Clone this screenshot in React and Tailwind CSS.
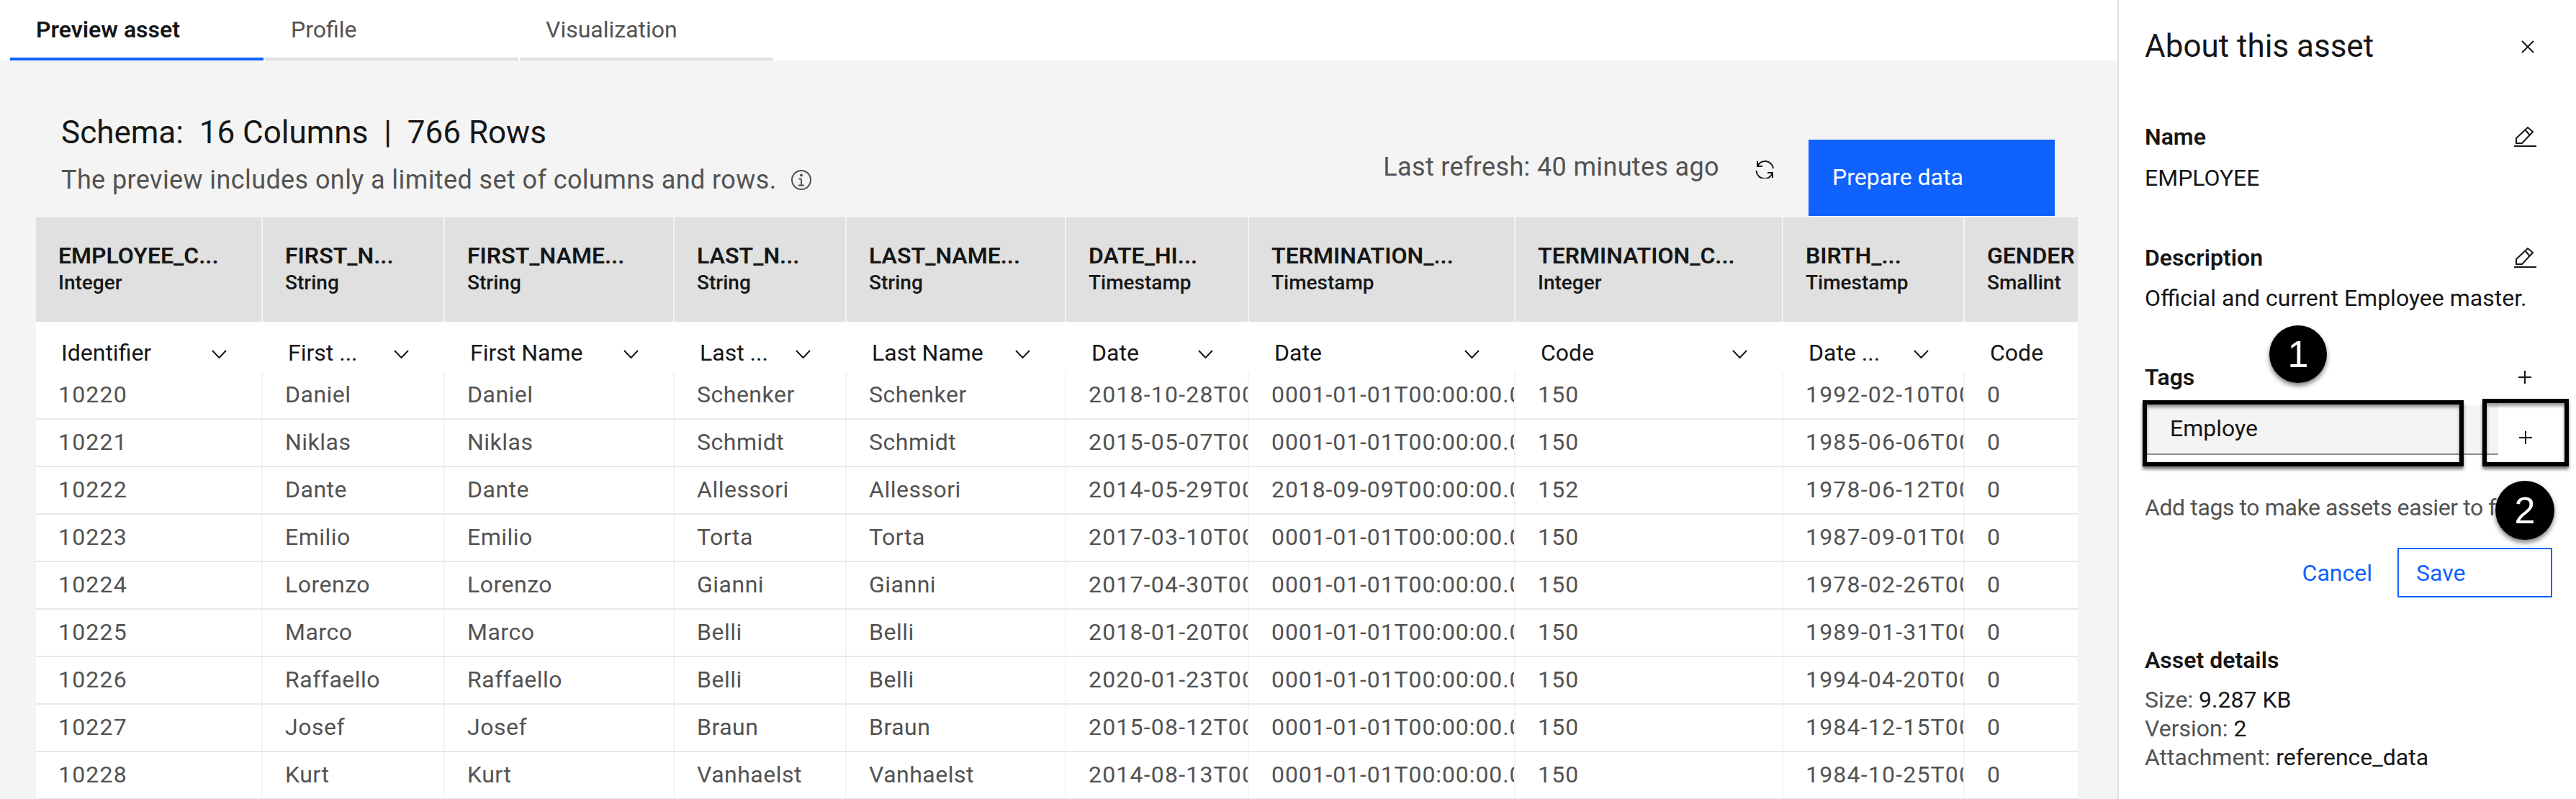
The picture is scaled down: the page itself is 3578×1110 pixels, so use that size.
import React from 'react';

const cols = 'grid grid-cols-[315px_253px_319px_239px_305px_254px_370px_372px_252px_157px]';

// number columns run a little wider than the name columns
const cellTracking = [
  'tracking-[1.2px]',
  'tracking-[0.5px]',
  'tracking-[0.5px]',
  'tracking-[0.5px]',
  'tracking-[0.5px]',
  'tracking-[1.2px]',
  'tracking-[0.9px]',
  'tracking-[1.2px]',
  'tracking-[1.2px]',
  'tracking-[1.2px]',
];

const columns = [
  { name: 'EMPLOYEE_C...', type: 'Integer', filter: 'Identifier', chevron: true },
  { name: 'FIRST_N...', type: 'String', filter: 'First ...', chevron: true },
  { name: 'FIRST_NAME...', type: 'String', filter: 'First Name', chevron: true },
  { name: 'LAST_N...', type: 'String', filter: 'Last ...', chevron: true },
  { name: 'LAST_NAME...', type: 'String', filter: 'Last Name', chevron: true },
  { name: 'DATE_HI...', type: 'Timestamp', filter: 'Date', chevron: true },
  { name: 'TERMINATION_...', type: 'Timestamp', filter: 'Date', chevron: true },
  { name: 'TERMINATION_C...', type: 'Integer', filter: 'Code', chevron: true },
  { name: 'BIRTH_...', type: 'Timestamp', filter: 'Date ...', chevron: true },
  { name: 'GENDER', type: 'Smallint', filter: 'Code', chevron: false },
];

const rows = [
  ['10220', 'Daniel', 'Daniel', 'Schenker', 'Schenker', '2018-10-28T00:00:00', '0001-01-01T00:00:00.000', '150', '1992-02-10T00:00:00', '0'],
  ['10221', 'Niklas', 'Niklas', 'Schmidt', 'Schmidt', '2015-05-07T00:00:00', '0001-01-01T00:00:00.000', '150', '1985-06-06T00:00:00', '0'],
  ['10222', 'Dante', 'Dante', 'Allessori', 'Allessori', '2014-05-29T00:00:00', '2018-09-09T00:00:00.000', '152', '1978-06-12T00:00:00', '0'],
  ['10223', 'Emilio', 'Emilio', 'Torta', 'Torta', '2017-03-10T00:00:00', '0001-01-01T00:00:00.000', '150', '1987-09-01T00:00:00', '0'],
  ['10224', 'Lorenzo', 'Lorenzo', 'Gianni', 'Gianni', '2017-04-30T00:00:00', '0001-01-01T00:00:00.000', '150', '1978-02-26T00:00:00', '0'],
  ['10225', 'Marco', 'Marco', 'Belli', 'Belli', '2018-01-20T00:00:00', '0001-01-01T00:00:00.000', '150', '1989-01-31T00:00:00', '0'],
  ['10226', 'Raffaello', 'Raffaello', 'Belli', 'Belli', '2020-01-23T00:00:00', '0001-01-01T00:00:00.000', '150', '1994-04-20T00:00:00', '0'],
  ['10227', 'Josef', 'Josef', 'Braun', 'Braun', '2015-08-12T00:00:00', '0001-01-01T00:00:00.000', '150', '1984-12-15T00:00:00', '0'],
  ['10228', 'Kurt', 'Kurt', 'Vanhaelst', 'Vanhaelst', '2014-08-13T00:00:00', '0001-01-01T00:00:00.000', '150', '1984-10-25T00:00:00', '0'],
];

const Chevron = () => (
  <svg width="21" height="12" viewBox="0 0 21 12" fill="none" stroke="#161616" strokeWidth="2" className="shrink-0 mt-[16px]">
    <path d="M1 1l9.5 10L20 1" />
  </svg>
);

const Plus = () => (
  <svg width="18" height="18" viewBox="0 0 18 18" fill="none" stroke="#161616" strokeWidth="2">
    <path d="M9 0v18M0 9h18" />
  </svg>
);

const Edit = () => (
  <svg width="31" height="30" viewBox="0 0 31 30" fill="none" stroke="#161616" strokeWidth="2">
    <path d="M0 28h31" />
    <path d="M3 24v-7L19 2l7 6-15 16z" />
    <path d="M16 6l6 7" />
  </svg>
);

export default function App() {
  return (
    <div className="w-[3578px] h-[1110px] flex overflow-hidden bg-white font-['Roboto',sans-serif] text-[32px] leading-[40px] text-[#161616]">
      <main className="w-[2941px] shrink-0 flex flex-col">
        {/* tabs */}
        <div className="h-[84px] shrink-0 pl-[14px] flex gap-[2px]">
          <div className="w-[352px] border-b-4 border-[#0f62fe] pl-[36px] pt-[21px] font-semibold">Preview asset</div>
          <div className="w-[352px] border-b-4 border-[#e0e0e0] pl-[36px] pt-[21px] text-[#525252]">Profile</div>
          <div className="w-[352px] border-b-4 border-[#e0e0e0] pl-[36px] pt-[21px] text-[#525252]">Visualization</div>
        </div>

        <div className="flex-1 bg-[#f4f4f4] pl-[50px] pr-[55px] flex flex-col">
          <div className="h-[218px] shrink-0 flex justify-between pr-[32px]">
            <div className="pl-[35px] pt-[72px]">
              <h2 className="text-[44px] leading-[56px] whitespace-pre">Schema:  16 Columns  |  766 Rows</h2>
              <p className="mt-[18px] text-[36px] tracking-[0.4px] text-[#525252] flex items-center gap-[20px] whitespace-nowrap">
                The preview includes only a limited set of columns and rows.
                <svg width="28" height="28" viewBox="0 0 28 28" fill="none" stroke="#525252" strokeWidth="2">
                  <circle cx="14" cy="14" r="13" />
                  <path d="M14 12.5v9M10 21.5h8M10.5 12.5H14" />
                  <circle cx="14" cy="7.5" r="1" fill="#525252" />
                </svg>
              </p>
            </div>
            <div className="flex items-start pt-[110px]">
              <span className="text-[36px] tracking-[0.35px] text-[#525252] mt-[18px] whitespace-nowrap">Last refresh: 40 minutes ago</span>
              <svg width="26" height="26" viewBox="0 0 26 26" fill="none" stroke="#161616" strokeWidth="2" className="ml-[50px] mt-[28px]">
                <path d="M3 2v7h7" />
                <path d="M3 9A11.5 11.5 0 0 1 25 12" />
                <path d="M24 25v-7h-7" />
                <path d="M24 18A11.5 11.5 0 0 1 1.5 15" />
              </svg>
              <button className="ml-[48px] w-[342px] h-[106px] bg-[#0f62fe] text-white text-left pl-[33px] pb-[2px]">Prepare data</button>
            </div>
          </div>

          {/* table */}
          <div className="flex-1 bg-white overflow-hidden">
            <div className={`${cols} h-[145px] bg-[#e0e0e0]`}>
              {columns.map((c, i) => (
                <div key={i} className="pl-[31px] pt-[33px] border-r-2 border-[#f4f4f4] last:border-r-0 overflow-hidden whitespace-nowrap">
                  <div className="font-semibold leading-[40px]">{c.name}</div>
                  <div className="text-[28px] leading-[34px] font-medium mt-[1px]">{c.type}</div>
                </div>
              ))}
            </div>
            <div className={`${cols} h-[70px]`}>
              {columns.map((c, i) => (
                <div key={i} className="pl-[35px] pr-[50px] pt-[23px] flex justify-between items-start whitespace-nowrap overflow-hidden">
                  <span>{c.filter}</span>
                  {c.chevron && <Chevron />}
                </div>
              ))}
            </div>
            {rows.map((r, i) => (
              <div key={i} className={`${cols} h-[66px] border-b-2 border-[#e8e8e8] text-[#525252]`}>
                {r.map((v, j) => (
                  <div key={j} className={`${cellTracking[j]} pl-[31px] pt-[11px] border-r-2 border-[#f4f4f4] last:border-r-0 overflow-hidden whitespace-nowrap`}>{v}</div>
                ))}
              </div>
            ))}
          </div>
        </div>
      </main>

      {/* about panel */}
      <aside className="relative w-[637px] shrink-0 border-l-2 border-[#e0e0e0] pl-[36px] pr-[55px]">
        <div className="h-[128px] flex justify-between items-center pr-[3px]">
          <h2 className="text-[44px] leading-[56px]">About this asset</h2>
          <svg width="18" height="18" viewBox="0 0 18 18" fill="none" stroke="#161616" strokeWidth="2" className="mt-[2px]">
            <path d="M1 1l16 16M17 1L1 17" />
          </svg>
        </div>

        <div className="mt-[42px] flex justify-between items-center h-[40px]">
          <span className="font-semibold">Name</span>
          <Edit />
        </div>
        <div className="mt-[17px]">EMPLOYEE</div>

        <div className="mt-[71px] flex justify-between items-center h-[40px]">
          <span className="font-semibold">Description</span>
          <Edit />
        </div>
        <div className="mt-[16px] whitespace-nowrap">Official and current Employee master.</div>

        <div className="mt-[70px] flex justify-between items-center h-[40px] pr-[7px]">
          <span className="font-semibold">Tags</span>
          <Plus />
        </div>

        <div className="mt-[19px] flex">
          <div className="w-[491px] h-[69px] shrink-0 bg-[#f4f4f4] border-b-2 border-[#8d8d8d] pl-[35px] pt-[12px]">Employe</div>
          <div className="w-[76px] h-[69px] shrink-0 flex items-center justify-center pt-[20px]">
            <Plus />
          </div>
        </div>

        <div className="mt-[53px] text-[#525252] tracking-[-0.4px] whitespace-nowrap">Add tags to make assets easier to find</div>

        <div className="mt-[36px] -mr-[22px] flex items-center justify-end">
          <span className="text-[#0f62fe]">Cancel</span>
          <button className="ml-[35px] w-[215px] h-[69px] border-2 border-[#0f62fe] text-[#0f62fe] text-left pl-[24px]">Save</button>
        </div>

        <div className="mt-[67px] font-semibold">Asset details</div>
        <div className="mt-[15px] text-[#525252]">Size: <span className="text-[#161616]">9.287 KB</span></div>
        <div className="text-[#525252]">Version: <span className="text-[#161616]">2</span></div>
        <div className="text-[#525252]">Attachment: <span className="text-[#161616]">reference_data</span></div>

        {/* annotation overlays */}
        <div className="absolute left-[33px] top-[556px] w-[446px] h-[92px] border-[6px] border-black shadow-[0_4px_4px_rgba(0,0,0,0.5),inset_0_4px_4px_rgba(0,0,0,0.4)]" />
        <div className="absolute left-[505px] top-[554px] w-[120px] h-[94px] border-[6px] border-black shadow-[0_4px_4px_rgba(0,0,0,0.5),inset_0_4px_4px_rgba(0,0,0,0.4)]" />
        <div className="absolute left-[209px] top-[452px] w-[80px] h-[80px] rounded-full bg-black text-white flex items-center justify-center font-['Liberation_Sans',sans-serif] text-[52px] shadow-[0_4px_6px_rgba(0,0,0,0.5)]">1</div>
        <div className="absolute left-[523px] top-[668px] w-[82px] h-[82px] rounded-full bg-black text-white flex items-center justify-center font-['Liberation_Sans',sans-serif] text-[52px] shadow-[0_4px_6px_rgba(0,0,0,0.5)]">2</div>
      </aside>
    </div>
  );
}
